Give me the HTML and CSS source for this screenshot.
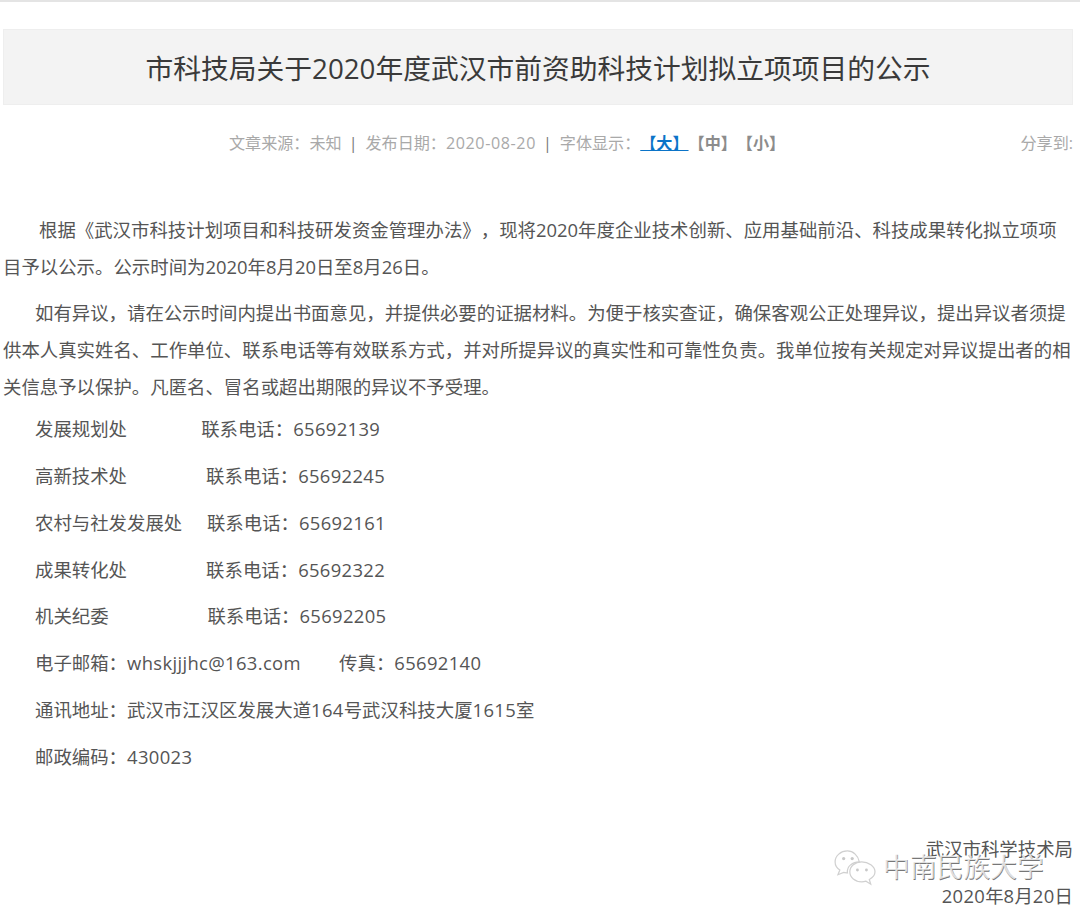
FILE: index.html
```html
<!DOCTYPE html>
<html lang="zh-CN">
<head>
<meta charset="utf-8">
<title>市科技局关于2020年度武汉市前资助科技计划拟立项项目的公示</title>
<link rel="stylesheet" href="styles.css">
</head>
<body>
<div class="page">
  <h1 class="title">市科技局关于2020年度武汉市前资助科技计划拟立项项目的公示</h1>
  <div class="meta">
    <div class="meta-info">文章来源：未知<span class="sep">|</span>发布日期：<span class="date">2020-08-20</span><span class="sep">|</span>字体显示：<a class="size active">【大】</a><a class="size">【中】</a><a class="size">【小】</a></div>
    <div class="share">分享到:</div>
  </div>
  <div class="content">
    <p class="first">根据《武汉市科技计划项目和科技研发资金管理办法》，现将2020年度企业技术创新、应用基础前沿、科技成果转化拟立项项目予以公示。公示时间为2020年8月20日至8月26日。</p>
    <p class="indent">如有异议，请在公示时间内提出书面意见，并提供必要的证据材料。为便于核实查证，确保客观公正处理异议，提出异议者须提供本人真实姓名、工作单位、联系电话等有效联系方式，并对所提异议的真实性和可靠性负责。我单位按有关规定对异议提出者的相关信息予以保护。凡匿名、冒名或超出期限的异议不予受理。</p>
    <p class="item tel">发展规划处&nbsp;&nbsp;&nbsp;&nbsp;&nbsp;&nbsp;&nbsp;&nbsp;&nbsp;&nbsp;&nbsp;&nbsp;&nbsp;&nbsp;&nbsp;联系电话：<span class="num">65692139</span></p>
    <p class="item tel">高新技术处&nbsp;&nbsp;&nbsp;&nbsp;&nbsp;&nbsp;&nbsp;&nbsp;&nbsp;&nbsp;&nbsp;&nbsp;&nbsp;&nbsp;&nbsp;&nbsp;联系电话：<span class="num">65692245</span></p>
    <p class="item tel">农村与社发发展处&nbsp;&nbsp;&nbsp;&nbsp;&nbsp;联系电话：<span class="num">65692161</span></p>
    <p class="item tel">成果转化处&nbsp;&nbsp;&nbsp;&nbsp;&nbsp;&nbsp;&nbsp;&nbsp;&nbsp;&nbsp;&nbsp;&nbsp;&nbsp;&nbsp;&nbsp;&nbsp;联系电话：<span class="num">65692322</span></p>
    <p class="item tel">机关纪委&nbsp;&nbsp;&nbsp;&nbsp;&nbsp;&nbsp;&nbsp;&nbsp;&nbsp;&nbsp;&nbsp;&nbsp;&nbsp;&nbsp;&nbsp;&nbsp;&nbsp;&nbsp;&nbsp;&nbsp;联系电话：<span class="num">65692205</span></p>
    <p class="item">电子邮箱：<span class="num">whskjjjhc@163.com</span>&nbsp;&nbsp;&nbsp;&nbsp;&nbsp;&nbsp;&nbsp;&nbsp;传真：<span class="num">65692140</span></p>
    <p class="item">通讯地址：武汉市江汉区发展大道<span class="num">164</span>号武汉科技大厦<span class="num">1615</span>室</p>
    <p class="item">邮政编码：<span class="num">430023</span></p>
    <p class="sign sign-org">武汉市科学技术局</p>
    <p class="sign"><span class="num">2020</span>年<span class="num">8</span>月<span class="num">20</span>日</p>
  </div>
  <div class="watermark">
    <svg class="wm-icon" width="44" height="38" viewBox="0 0 46 40" fill="none">
      <path class="wm-stroke" d="M14 1C7 1 1 6 1 12.500C1 16 3 19 6 21L4 26L10 23.500C11.500 24 12.500 24 14 24.200C13 17 19.500 12.500 26.500 12.500C25.500 6 20 1 14 1Z"/>
      <path class="wm-stroke" d="M29 12.500C22 12.500 16.500 17 16.500 23C16.500 29 22 33.500 29 33.500C30.500 33.500 32 33.300 33.500 32.800L38.500 36L37 31C41 29 43 26.500 43 23C43 17 36 12.500 29 12.500Z"/>
      <circle class="wm-dot" cx="10" cy="9" r="1.700"/><circle class="wm-dot" cx="19" cy="9" r="1.700"/>
      <circle class="wm-dot" cx="24.500" cy="21" r="1.500"/><circle class="wm-dot" cx="34" cy="21" r="1.500"/>
    </svg>
    <span class="wm-text">中南民族大学</span>
  </div>
</div>
</body>
</html>
```
FILE: styles.css
```css
* { box-sizing: border-box; }
html, body { margin: 0; padding: 0; background: #fff; }
body { font-family: "Open Sans", "Noto Sans CJK SC", sans-serif; color: #555; overflow: hidden; text-spacing-trim: space-all; }
.page { position: relative; width: 1080px; height: 915px; border-top: 2px solid #e4e4e4; padding: 27px 7px 0 3px; overflow: hidden; }
.title { margin: 0; height: 76px; line-height: 76px; background: #f3f3f3; border: 1px solid #eeeeee; text-align: center; font-size: 27.750px; font-weight: 400; color: #3a3a3a; }
.meta { display: flex; justify-content: space-between; align-items: center; margin-top: 25px; height: 24px; font-size: 16.100px; color: #a9a9a9; padding-left: 226px; }
.meta-info { white-space: nowrap; }
.sep { margin: 0 8px 0 7px; color: #777; }
.date { letter-spacing: .6px; }
.share { white-space: nowrap; }
.size { color: #8c8c8c; font-weight: 700; }
.size.active { color: #0b74c8; text-decoration: underline; }
.content { margin-top: 58px; font-size: 18.420px; line-height: 36.750px; color: #555; }
.content p { margin: 0 0 9.500px; }
.content .indent { text-indent: 32px; margin-bottom: 6px; }
.first { text-indent: 36px; }
.content .item { padding-left: 32px; margin-bottom: 10px; }
.tel { word-spacing: .16px; }
.num { letter-spacing: .35px; }
.content .sign { text-align: right; margin-bottom: 10px; }
.content .sign-org { margin-top: 56px; }
.watermark { position: absolute; left: 834px; top: 845px; display: flex; align-items: center; gap: 5px; }
.wm-stroke { stroke: #d0d0d0; stroke-width: 1.300; fill: rgba(255,255,255,.45); }
.wm-dot { fill: #c8c8c8; }
.wm-text { font-size: 26.800px; line-height: 40px; margin-bottom: 4px; color: rgba(255,255,255,.75); text-shadow: .6px .6px .5px #777; white-space: nowrap; }
```
